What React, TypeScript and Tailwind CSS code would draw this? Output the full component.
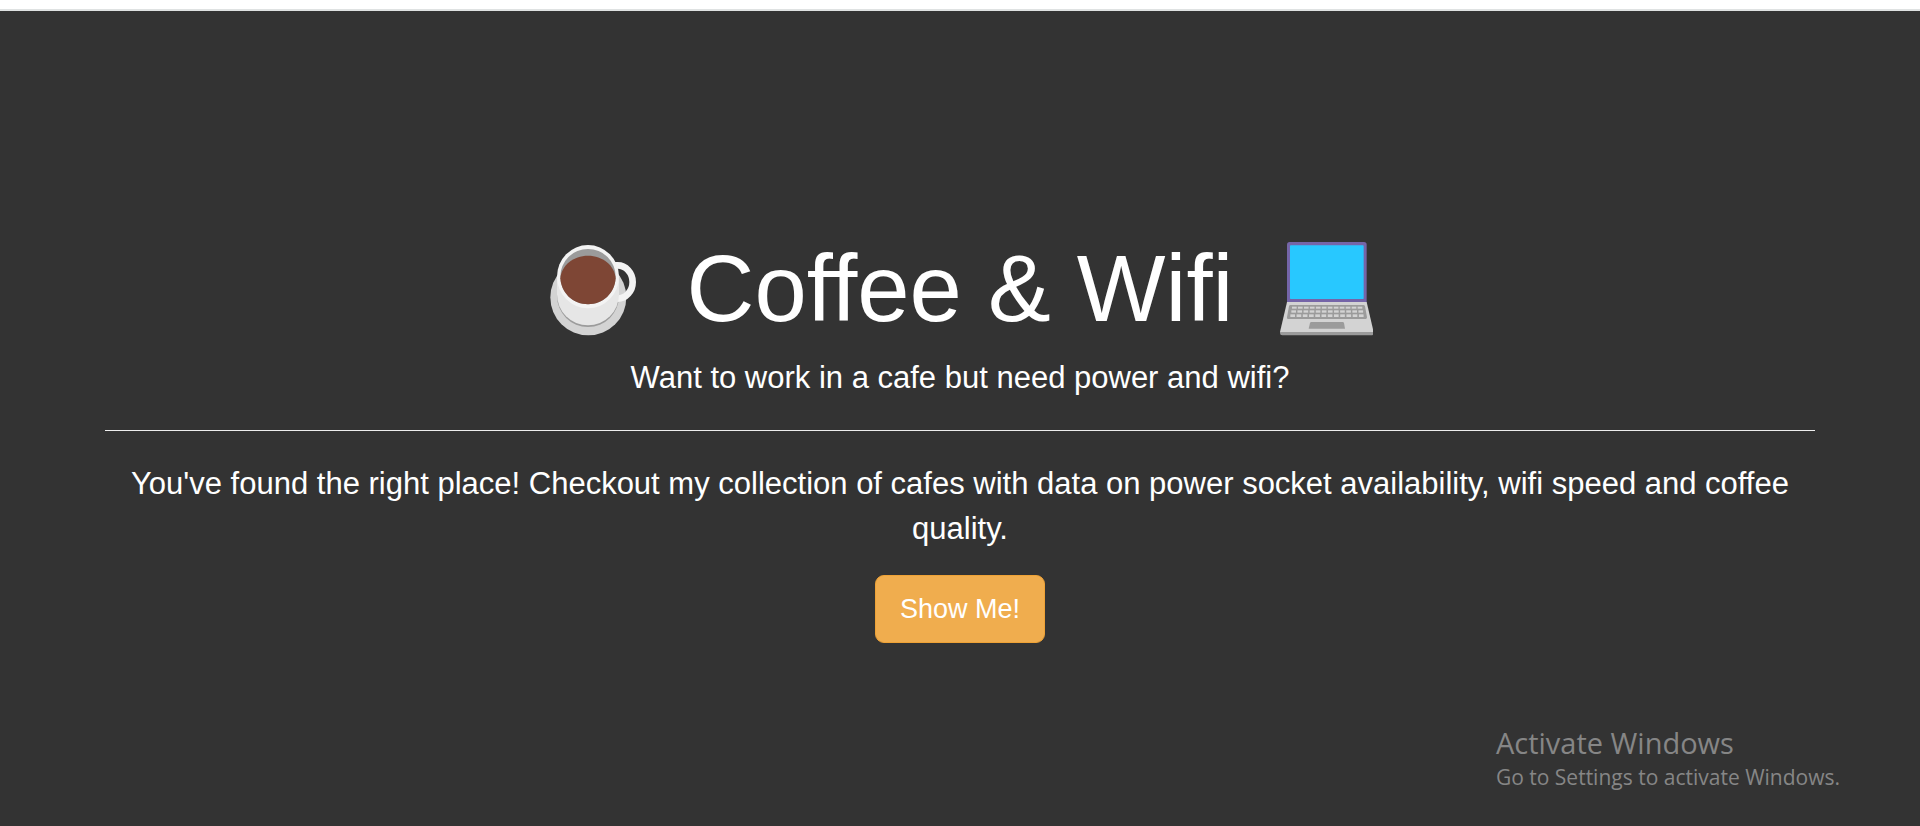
const keyRows = [
  { y: 242, x: 93, step: 17.9, height: 6 },
  { y: 253, x: 91, step: 18.3, height: 7 },
  { y: 265, x: 88, step: 18.7, height: 8 },
];
const keyColumns = [0, 1, 2, 3, 4, 5, 6, 7, 8, 9, 10, 11];

function CoffeeIcon() {
  return (
    <svg viewBox="54 30 288 288" className="size-24 shrink-0" aria-hidden="true">
      <circle cx="178" cy="199" r="114" fill="#d3d3d3" />
      <path d="M84 150V195A93 93 0 0 0 270 195V150Z" fill="#9b9b9b" />
      <path
        d="M258 103H266C290 103 311 125 311 153S290 203 266 203H258"
        fill="none"
        stroke="#f3f3f3"
        strokeWidth="20"
      />
      <path d="M84 138V190A93 93 0 0 0 270 190V138Z" fill="#e6e6e6" />
      <ellipse cx="177" cy="137" rx="93" ry="95" fill="#f3f3f3" />
      <ellipse cx="177" cy="137" rx="83" ry="83" fill="#9b9b9b" />
      <path
        d="M94 142C97 103 133 74 177 74S257 103 260 142C257 187 222 220 177 220S97 187 94 142Z"
        fill="#7e4635"
      />
    </svg>
  );
}

function LaptopIcon() {
  return (
    <svg viewBox="48 45 288 288" className="size-24 shrink-0" aria-hidden="true">
      <path d="M78 230V56Q78 48 86 48H309Q317 48 317 56V230Z" fill="#7565a8" />
      <rect x="87" y="58" width="221" height="161" rx="2" fill="#28c8ff" />
      <path d="M78 228H317L338 318H57Z" fill="#d3d3d3" />
      <path d="M57 318H338V321Q338 328 331 328H64Q57 328 57 321Z" fill="#9b9b9b" />
      <path
        d="M88 237H307Q311 237 312 241L318 274Q318 279 314 279H81Q77 279 78 274L84 241Q85 237 88 237Z"
        fill="#9b9b9b"
      />
      {keyRows.map((row) =>
        keyColumns.map((column) => (
          <rect
            key={`${row.y}-${column}`}
            x={row.x + column * row.step}
            y={row.y}
            width="14"
            height={row.height}
            fill="#d3d3d3"
          />
        )),
      )}
      <path d="M151 288H245Q248 288 249 291L252 308H143L147 291Q148 288 151 288Z" fill="#9b9b9b" />
    </svg>
  );
}

export default function App() {
  return (
    <div className="flex min-h-screen flex-col bg-[#333333] font-['Liberation_Sans',Arial,sans-serif] text-white">
      <header className="h-[11px] border-b-2 border-[#dfe2e2] bg-white" />
      <main className="flex flex-1 flex-col items-center px-6 pt-[218px] text-center">
        <div className="flex w-full max-w-[1710px] flex-col items-center">
          <h1 className="flex items-center gap-11 text-[94px] leading-[120px]">
            <CoffeeIcon />
            <span>Coffee &amp; Wifi</span>
            <LaptopIcon />
          </h1>
          <p className="mt-1.5 text-[31px] leading-[45px]">Want to work in a cafe but need power and wifi?</p>
          <hr className="my-[30px] w-full border-t border-[#eeeeee]" />
          <p className="text-[31px] leading-[45px]">
            You've found the right place! Checkout my collection of cafes with data on power socket availability, wifi
            speed and coffee quality.
          </p>
          <a
            href="#cafes"
            className="mt-6 rounded-[9px] border border-[#eea236] bg-[#f0ad4e] px-6 py-[15px] text-[27px] leading-9"
          >
            Show Me!
          </a>
        </div>
      </main>
      <aside className="mr-20 mb-[33px] self-end font-['Open_Sans','Noto_Sans',sans-serif] text-[#868686]">
        <p className="text-[29px] leading-9">Activate Windows</p>
        <p className="text-[21px] leading-8">Go to Settings to activate Windows.</p>
      </aside>
    </div>
  );
}
